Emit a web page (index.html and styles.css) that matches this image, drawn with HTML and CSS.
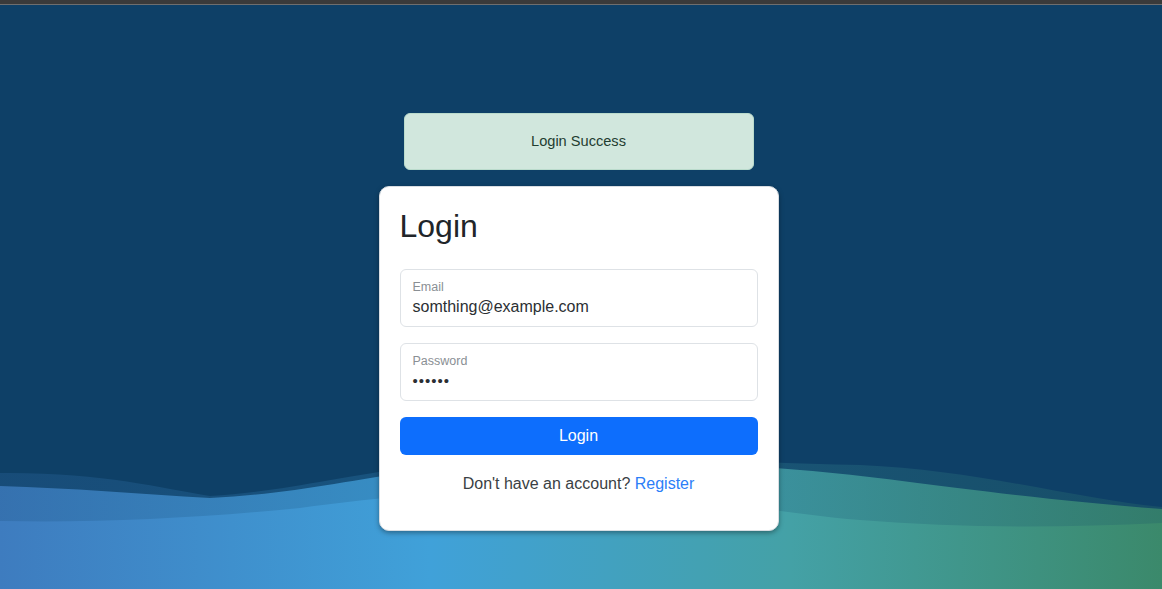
FILE: index.html
```html
<!DOCTYPE html>
<html lang="en">
<head>
<meta charset="utf-8">
<title>Login</title>
<link rel="stylesheet" href="styles.css">
</head>
<body>
<div class="topbar"></div>
<div class="page">
  <svg class="waves" viewBox="0 440 1162 149" preserveAspectRatio="none" aria-hidden="true">
    <defs>
      <linearGradient id="g" gradientUnits="userSpaceOnUse" x1="0" y1="0" x2="1162" y2="0">
        <stop offset="0" stop-color="#3e7cbf"/>
        <stop offset="0.37" stop-color="#40a1d9"/>
        <stop offset="0.68" stop-color="#44a1a6"/>
        <stop offset="1" stop-color="#3b896b"/>
      </linearGradient>
    </defs>
    <path fill="url(#g)" opacity="0.2" d="M0,473 C100,472 160,488 210,496 C280,492 330,478 420,466 C560,448 700,462 860,465 C980,470 1080,500 1162,507 L1162,589 L0,589 Z"/>
    <path fill="url(#g)" opacity="0.78" d="M0,486 C70,488 140,494 210,498 C290,494 340,482 420,470 C560,452 700,462 800,470 C900,478 1000,497 1162,509 L1162,589 L0,589 Z"/>
    <path fill="url(#g)" d="M0,521 C100,523 200,518 300,508 C380,498 460,488 560,488 C680,490 760,512 860,520 C960,528 1060,528 1162,523 L1162,589 L0,589 Z"/>
  </svg>
  <main class="stack">
    <div class="alert">Login Success</div>
    <section class="card">
      <h2 class="title">Login</h2>
      <div class="field">
        <div class="field-label">Email</div>
        <div class="field-value">somthing@example.com</div>
      </div>
      <div class="field">
        <div class="field-label">Password</div>
        <div class="field-value dots">••••••</div>
      </div>
      <button class="btn" type="button">Login</button>
      <p class="foot">Don't have an account? <a class="link" href="#">Register</a></p>
    </section>
  </main>
</div>
</body>
</html>
```

FILE: styles.css
```css
* { box-sizing: border-box; }
html, body { margin: 0; padding: 0; }
body {
  width: 1162px;
  height: 589px;
  overflow: hidden;
  background: #0e4067;
  font-family: "Liberation Sans", Arial, sans-serif;
  color: #212529;
}
.topbar {
  height: 5px;
  background: #3a3a3a;
  border-bottom: 1px solid #6e6e6e;
}
.page {
  position: relative;
  height: 584px;
}
.waves {
  position: absolute;
  left: 0;
  top: -5px;
  margin-top: 440px;
  width: 1162px;
  height: 149px;
  display: block;
}
.stack {
  position: relative;
  display: flex;
  flex-direction: column;
  align-items: center;
  padding-top: 108px;
  padding-right: 5px;
}
.alert {
  width: 350px;
  height: 57px;
  background: #d1e7dd;
  border: 1px solid #badbcc;
  border-radius: 6px;
  color: #1f3d30;
  font-size: 14.6px;
  line-height: 24px;
  padding: 15px 16px;
  text-align: center;
  margin-bottom: 16px;
}
.card {
  width: 400px;
  background: #fff;
  border: 1px solid #d8dde2;
  border-radius: 10px;
  padding: 20px 20px 19px;
  box-shadow: 0 2px 5px rgba(0, 0, 0, 0.35);
}
.title {
  margin: 0 0 24px;
  font-size: 32px;
  line-height: 38px;
  font-weight: 400;
  color: #212529;
}
.field {
  height: 58px;
  border: 1px solid #dee2e6;
  border-radius: 6px;
  padding: 9px 12px 0;
  margin-bottom: 16px;
}
.field-label {
  font-size: 12.5px;
  line-height: 16px;
  color: #8a8f94;
}
.field-value {
  font-size: 16px;
  line-height: 24px;
  color: #2b2f33;
}
.dots {
  letter-spacing: 1px;
  font-size: 15px;
}
.btn {
  display: block;
  width: 100%;
  height: 38px;
  border: 0;
  border-radius: 6px;
  background: #0d6efd;
  color: #fff;
  font-family: inherit;
  font-size: 16px;
  line-height: 24px;
  padding: 0;
}
.foot {
  margin: 17px 0 15px;
  text-align: center;
  font-size: 16px;
  line-height: 24px;
  color: #3a3f44;
}
.link {
  color: #2c7ef8;
  text-decoration: none;
}
```
